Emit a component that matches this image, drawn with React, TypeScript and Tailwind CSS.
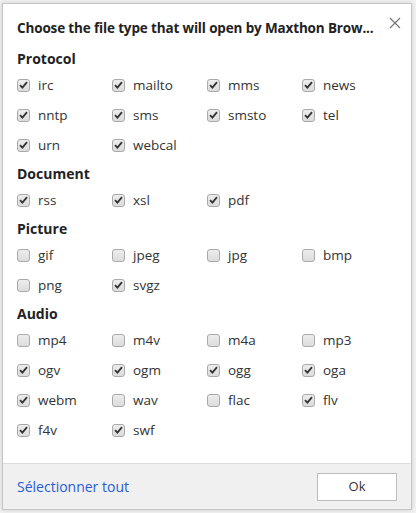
type Item = { name: string; checked: boolean };

type Section = { title: string; items: Item[] };

const sections: Section[] = [
  {
    title: "Protocol",
    items: [
      { name: "irc", checked: true },
      { name: "mailto", checked: true },
      { name: "mms", checked: true },
      { name: "news", checked: true },
      { name: "nntp", checked: true },
      { name: "sms", checked: true },
      { name: "smsto", checked: true },
      { name: "tel", checked: true },
      { name: "urn", checked: true },
      { name: "webcal", checked: true },
    ],
  },
  {
    title: "Document",
    items: [
      { name: "rss", checked: true },
      { name: "xsl", checked: true },
      { name: "pdf", checked: true },
    ],
  },
  {
    title: "Picture",
    items: [
      { name: "gif", checked: false },
      { name: "jpeg", checked: false },
      { name: "jpg", checked: false },
      { name: "bmp", checked: false },
      { name: "png", checked: false },
      { name: "svgz", checked: true },
    ],
  },
  {
    title: "Audio",
    items: [
      { name: "mp4", checked: false },
      { name: "m4v", checked: false },
      { name: "m4a", checked: false },
      { name: "mp3", checked: false },
      { name: "ogv", checked: true },
      { name: "ogm", checked: true },
      { name: "ogg", checked: true },
      { name: "oga", checked: true },
      { name: "webm", checked: true },
      { name: "wav", checked: false },
      { name: "flac", checked: false },
      { name: "flv", checked: true },
      { name: "f4v", checked: true },
      { name: "swf", checked: true },
    ],
  },
];

function Box({ checked }: { checked: boolean }) {
  return (
    <span className="flex h-[13px] w-[13px] shrink-0 items-center justify-center rounded-[3px] border border-[#a9a9a9] bg-gradient-to-b from-[#ededed] to-[#dcdcdc]">
      {checked && (
        <svg width="9" height="8" viewBox="0 0 9 8">
          <path d="M1 4.2 L3.4 6.6 L8 1.2" fill="none" stroke="#333" strokeWidth="1.8" />
        </svg>
      )}
    </span>
  );
}

export default function App() {
  return (
    <div
      className="h-[513px] w-[416px] overflow-hidden bg-[#f1f1f1] pl-[2px] pt-[3px]"
      style={{ fontFamily: '"Open Sans", "Noto Sans", sans-serif' }}
    >
      <div className="flex h-[507px] w-[410px] flex-col border border-[#c6c6c6] bg-white shadow-[0_0_4px_rgba(0,0,0,0.15)]">
        <div className="flex-1 px-[14px]">
          <div className="flex items-start justify-between pt-[14px]">
            <h1 className="whitespace-nowrap text-[13.5px] font-bold leading-[20px] tracking-[-0.15px] text-[#222]">
              Choose the file type that will open by Maxthon Brow...
            </h1>
            <svg width="12" height="12" viewBox="0 0 12 12" className="-mr-[4px] -mt-[1px]">
              <path d="M1 1 L11 11 M11 1 L1 11" stroke="#777" strokeWidth="1.2" />
            </svg>
          </div>
          {sections.map((s, i) => (
            <div key={s.title} className={i === 0 ? "mt-[10px]" : "mt-[3px]"}>
              <h2 className="text-[14px] font-bold leading-[22px] text-[#222]">{s.title}</h2>
              <div className="grid grid-cols-[95px_95px_95px_95px]">
                {s.items.map((it) => (
                  <label key={it.name} className="flex h-[30px] items-center gap-[8px]">
                    <Box checked={it.checked} />
                    <span className="text-[13.5px] text-[#333]">{it.name}</span>
                  </label>
                ))}
              </div>
            </div>
          ))}
        </div>
        <div className="flex h-[46px] items-center justify-between border-t border-[#dcdcdc] bg-[#f0f0f0] pl-[14px] pr-[14px]">
          <a className="text-[14px] text-[#2a5bd7]">Sélectionner tout</a>
          <button className="h-[28px] w-[80px] border border-[#bdbdbd] bg-white text-[13px] text-[#333]">
            Ok
          </button>
        </div>
      </div>
    </div>
  );
}
